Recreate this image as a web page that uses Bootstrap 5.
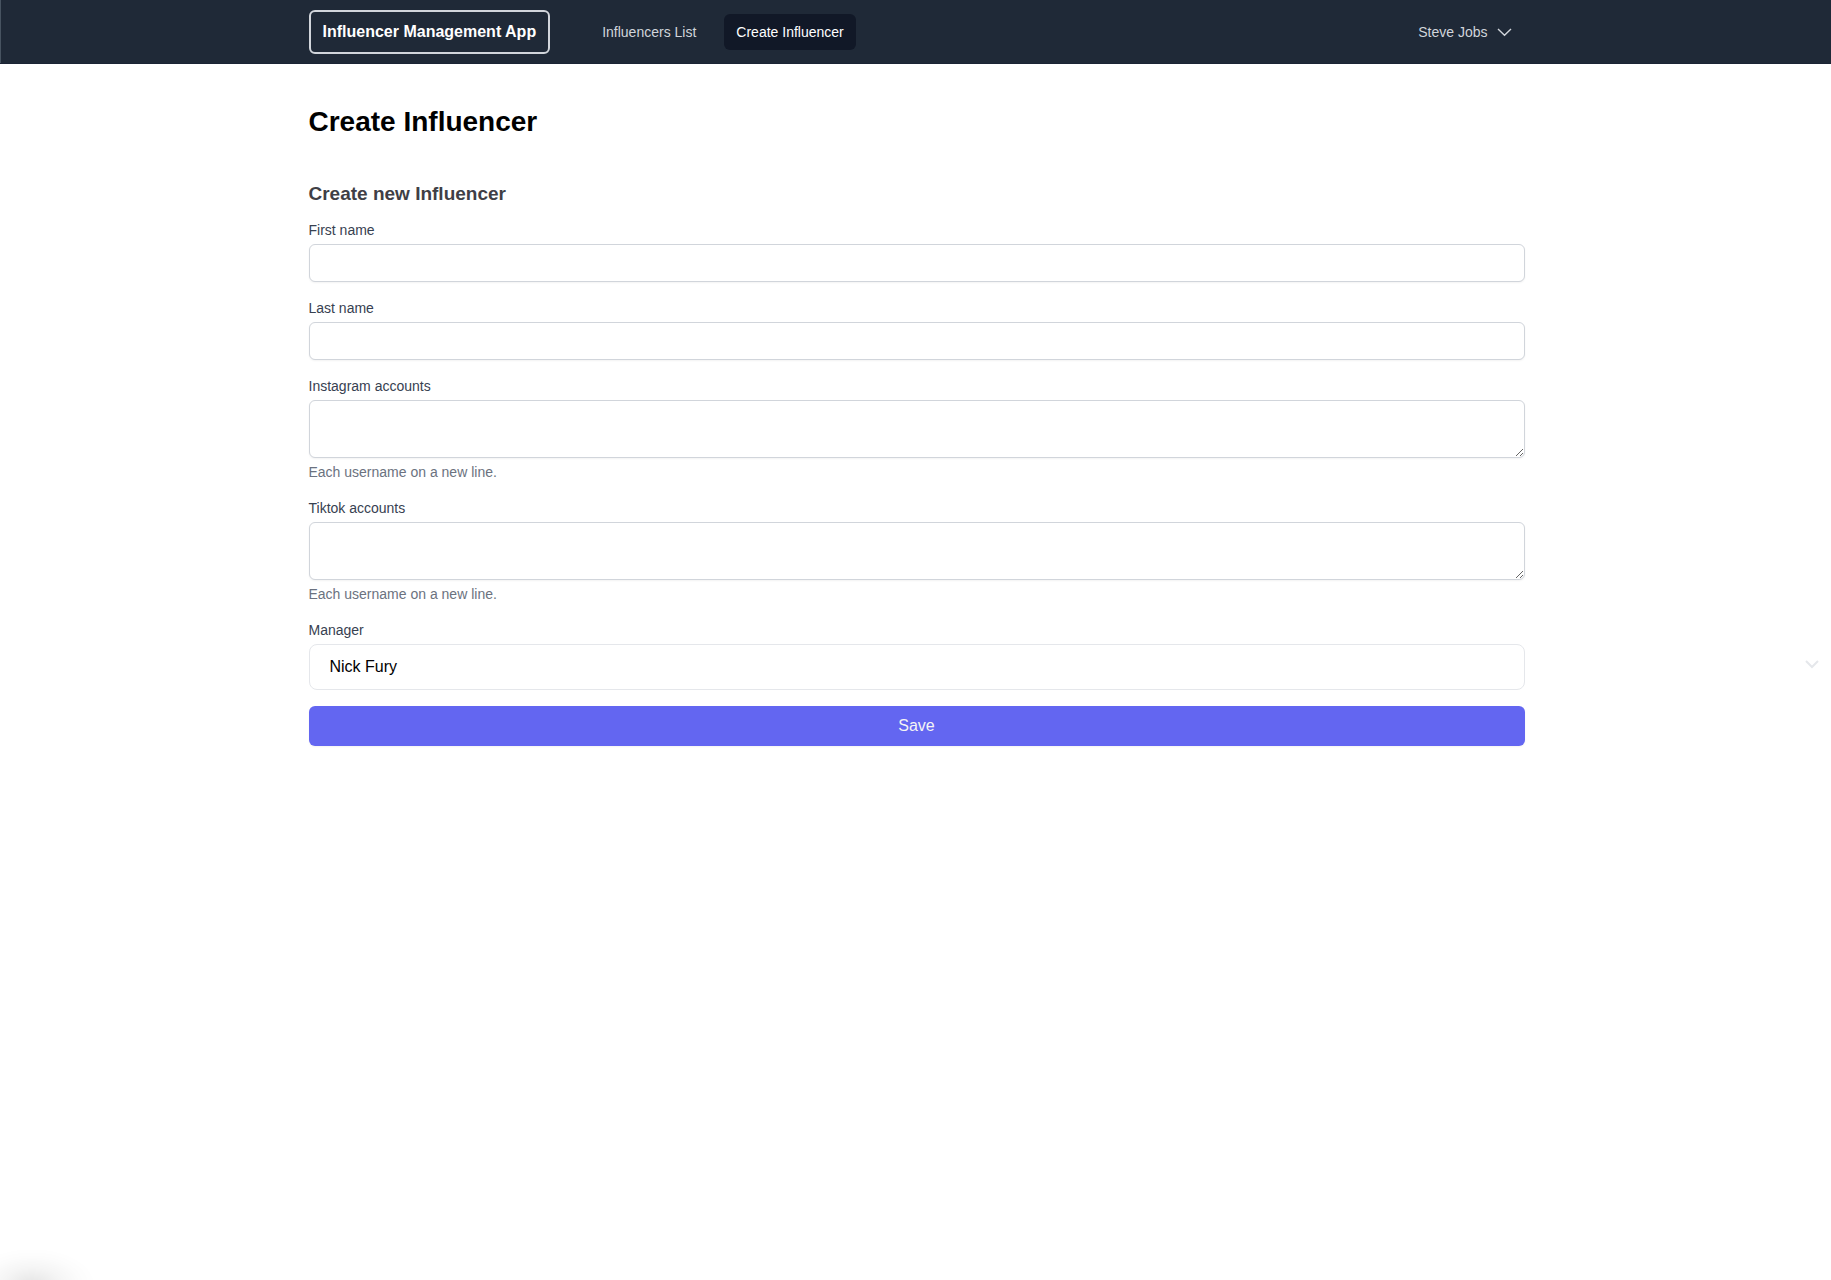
<!DOCTYPE html>
<html lang="en">
<head>
<meta charset="utf-8">
<meta name="viewport" content="width=device-width, initial-scale=1">
<title>Create Influencer</title>
<link href="https://cdn.jsdelivr.net/npm/bootstrap@5.3.0/dist/css/bootstrap.min.css" rel="stylesheet">
<style>
  body { font-family: "Liberation Sans", Arial, sans-serif; font-size: 14px; line-height: 20px; color: #000; background: #fff; min-height: 100vh; overflow-x: hidden; }
  .shell { max-width: 1280px; padding: 0 32px; }
  .topbar, .page-main { padding: 0 0 0 2px; }
  .topbar { background: #1f2937; border-bottom: 1px solid #1b2435; box-shadow: inset 1px 0 #475360; }
  .topbar .shell { height: 63px; }
  .app-brand { margin: 0 40px 0 0; padding: 8px 12px; border: 2px solid #d1d5db; border-radius: 6px; font-size: 16px; line-height: 24px; font-weight: 700; }
  .app-brand, .app-brand:hover { color: #fff; }
  .topbar .nav-link, .user-menu { padding: 8px 12px; border-radius: 6px; color: #d1d5db; font-size: 14px; line-height: 20px; }
  .topbar .nav-link.active { background: #111827; color: #fff; }
  .user-menu { background: none; border: 0; }
  h1 { font-size: 28px; line-height: 36px; font-weight: 700; margin: 40px 0; }
  h2 { font-size: 19px; line-height: 28px; font-weight: 700; color: #3f3f46; margin: 0 0 12px; }
  .form-label { color: #374151; margin-bottom: 4px; }
  .form-text { color: #6b7280; font-size: 14px; }
  .form-control { height: 38px; border-color: #d1d5db; border-radius: 6px; box-shadow: 0 1px 2px rgba(0,0,0,.05); }
  textarea.form-control { height: 58px; min-height: 58px; }
  .form-select { height: 46px; padding: 8px 20px; border-color: #e5e7eb; border-radius: 8px; font-size: 16px; line-height: 24px; color: #000; background-image: none; }
  .page-main { position: relative; }
  .select-arrow { position: absolute; right: 10px; bottom: 75px; pointer-events: none; }
  .save-btn { height: 40px; border: 0; border-radius: 6px; background: #6366f1; color: #f4f4f5; font-size: 16px; line-height: 24px; box-shadow: 0 1px 2px rgba(0,0,0,.05); }
  .corner-glow { position: fixed; left: -32px; bottom: -40px; width: 128px; height: 72px; background: radial-gradient(closest-side, rgba(0,0,0,.1), rgba(0,0,0,.04) 45%, rgba(0,0,0,.01) 75%, transparent); pointer-events: none; }
</style>
</head>
<body>
<header class="topbar">
  <div class="container-fluid shell d-flex align-items-center">
    <a class="navbar-brand app-brand" href="#">Influencer Management App</a>
    <nav class="nav gap-3">
      <a class="nav-link" href="#">Influencers List</a>
      <a class="nav-link active" href="#" aria-current="page">Create Influencer</a>
    </nav>
    <button class="user-menu ms-auto d-flex align-items-center gap-2" type="button">
      Steve Jobs
      <svg width="17" height="16" viewBox="0 0 17 16" fill="none" stroke="#d1d5db" stroke-width="1.4" aria-hidden="true"><path d="M2 5 8.500 11.300 15 5"/></svg>
    </button>
  </div>
</header>
<main class="page-main">
  <div class="container-fluid shell">
    <h1>Create Influencer</h1>
    <h2>Create new Influencer</h2>
    <form>
      <div class="mb-3">
        <label class="form-label d-block" for="first">First name</label>
        <input class="form-control" id="first" type="text">
      </div>
      <div class="mb-3">
        <label class="form-label d-block" for="last">Last name</label>
        <input class="form-control" id="last" type="text">
      </div>
      <div class="mb-3">
        <label class="form-label d-block" for="instagram">Instagram accounts</label>
        <textarea class="form-control" id="instagram" aria-describedby="instagram-help"></textarea>
        <div class="form-text" id="instagram-help">Each username on a new line.</div>
      </div>
      <div class="mb-3">
        <label class="form-label d-block" for="tiktok">Tiktok accounts</label>
        <textarea class="form-control" id="tiktok" aria-describedby="tiktok-help"></textarea>
        <div class="form-text" id="tiktok-help">Each username on a new line.</div>
      </div>
      <div class="mb-3">
        <label class="form-label d-block" for="manager">Manager</label>
        <select class="form-select" id="manager"><option>Nick Fury</option></select>
      </div>
      <button class="btn save-btn w-100" type="submit">Save</button>
    </form>
  </div>
  <svg class="select-arrow" width="18" height="14" viewBox="0 0 18 14" fill="none" stroke="#e5e7eb" stroke-width="2" aria-hidden="true"><path d="M3 4 9 10 15 4"/></svg>
</main>
<div class="corner-glow"></div>
<script src="https://cdn.jsdelivr.net/npm/bootstrap@5.3.0/dist/js/bootstrap.bundle.min.js"></script>
</body>
</html>
